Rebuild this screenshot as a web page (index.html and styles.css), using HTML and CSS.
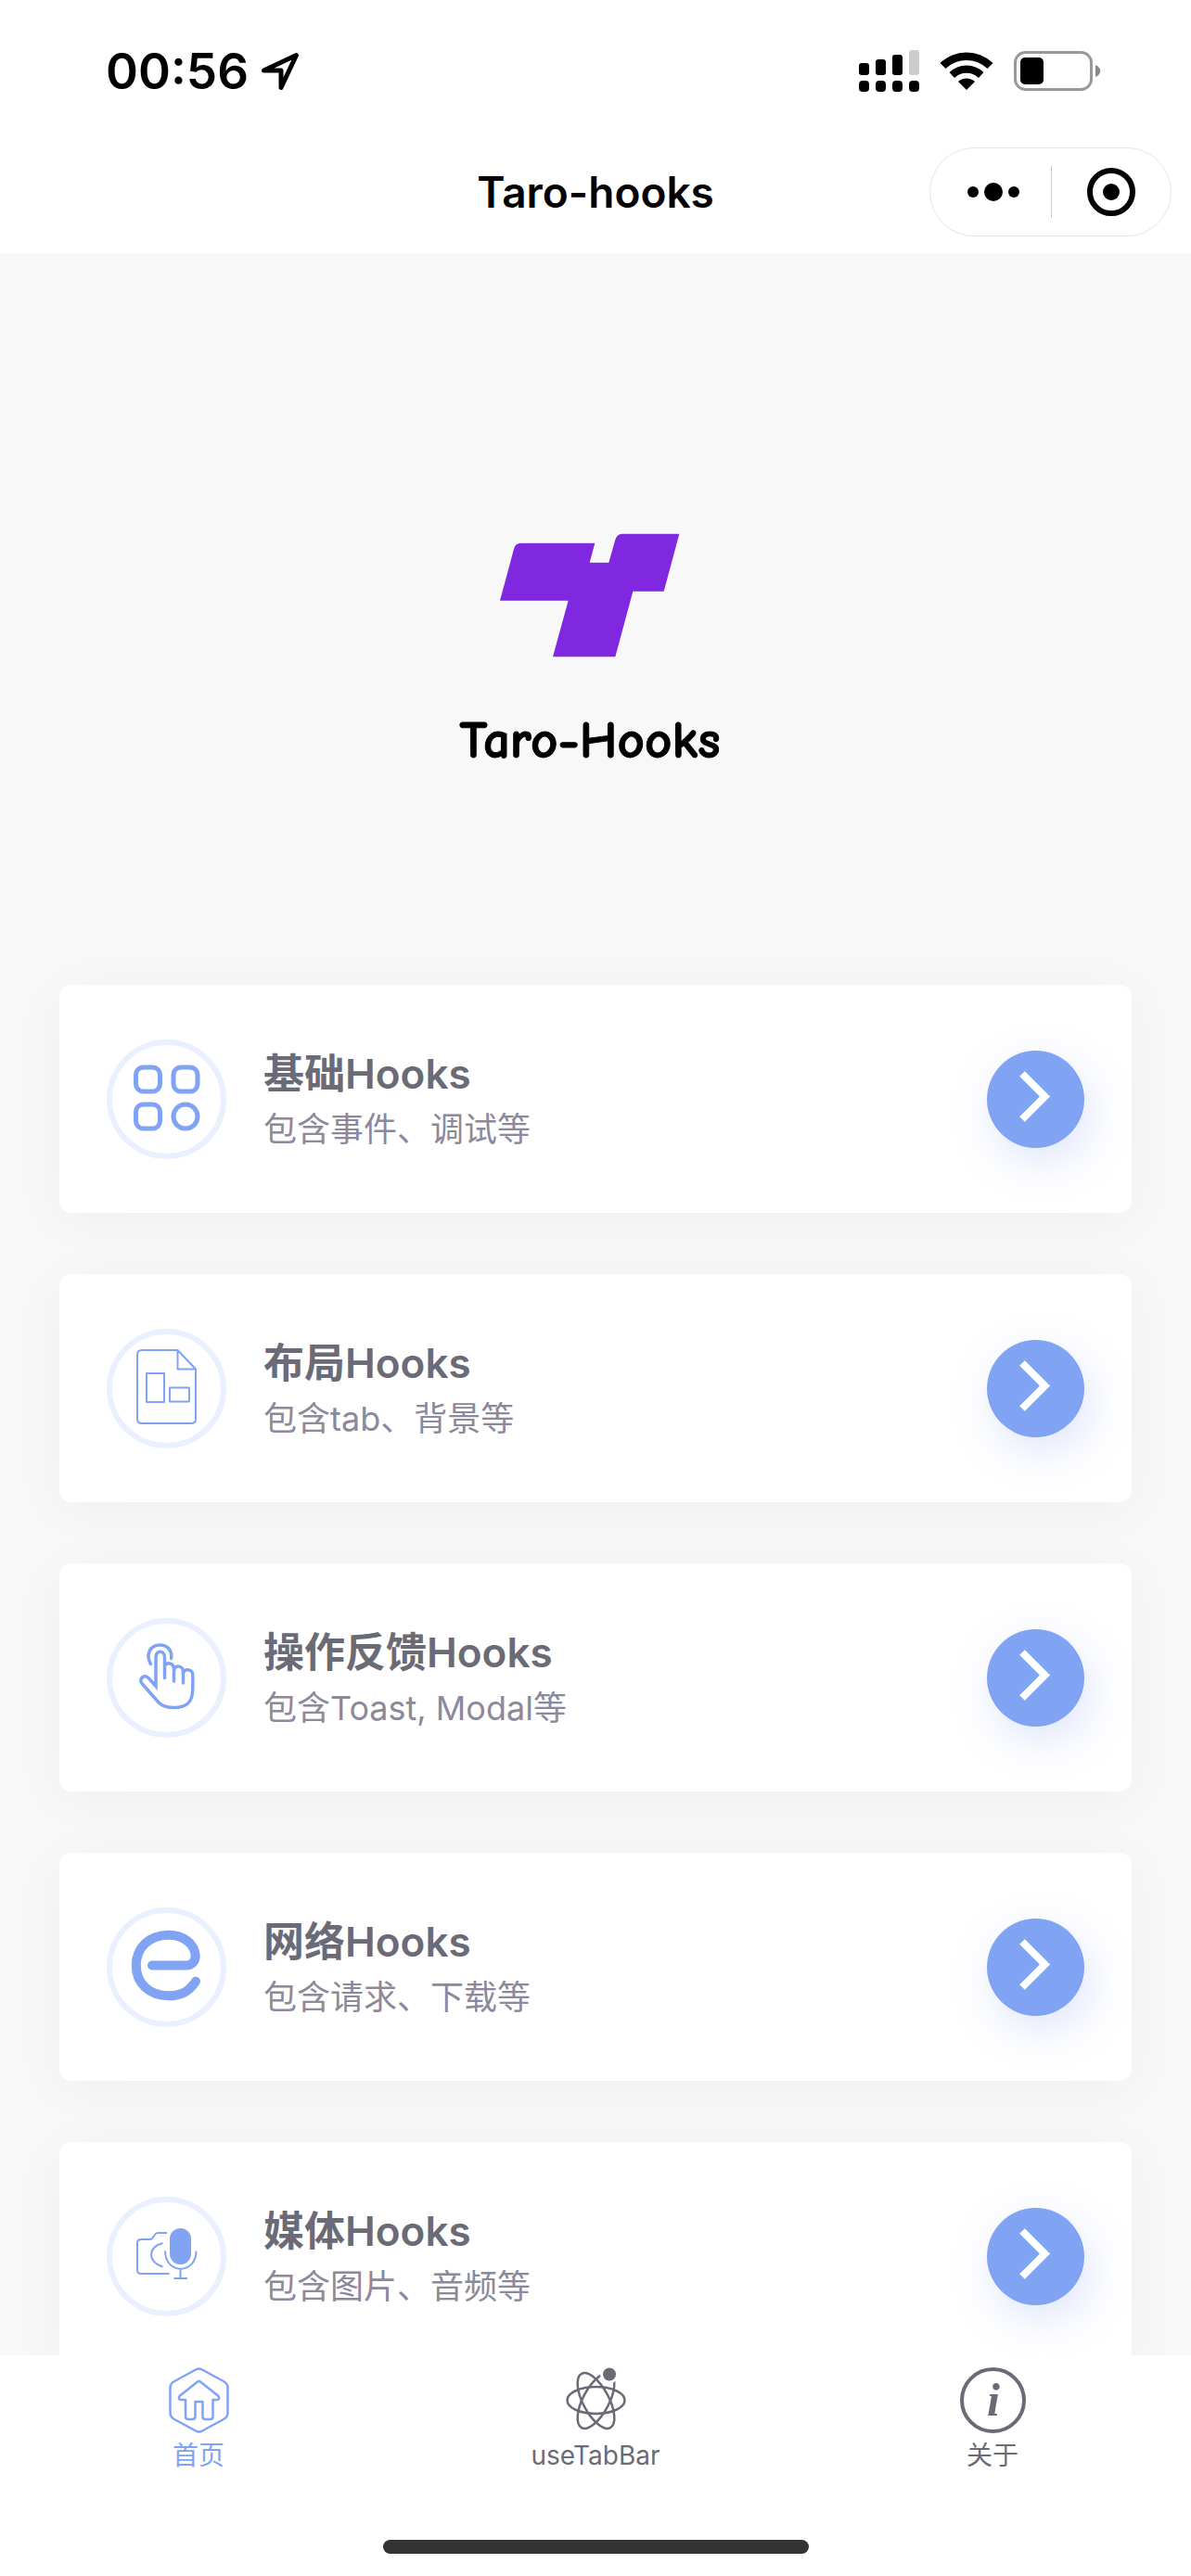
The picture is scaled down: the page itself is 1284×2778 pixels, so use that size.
FILE: index.html
```html
<!DOCTYPE html>
<html lang="zh-CN">
<head>
<meta charset="utf-8">
<meta name="viewport" content="width=device-width, initial-scale=1">
<title>Taro-hooks</title>
<link rel="stylesheet" href="styles.css">
</head>
<body>
<div class="app">
  <header class="header">
    <div class="status">
      <div class="status-left">
        <time class="clock">00:56</time>
        <svg class="location" viewBox="0 0 42 42" aria-hidden="true"><path d="M3.5 20 38.5 3.5 22 38.5 V20 Z"/></svg>
      </div>
      <div class="status-right">
        <svg width="65" height="46" viewBox="0 0 65 46" aria-hidden="true">
          <rect x="0" y="14" width="11" height="13" rx="3"/><rect x="18" y="10" width="11" height="17" rx="3"/>
          <rect x="36" y="5" width="11" height="22" rx="3"/><rect x="54" y="0" width="11" height="27" rx="3" fill="#ccc"/>
          <rect x="0" y="33" width="11" height="12" rx="4"/><rect x="18" y="33" width="11" height="12" rx="4"/>
          <rect x="36" y="33" width="11" height="12" rx="4"/><rect x="54" y="33" width="11" height="12" rx="4"/>
        </svg>
        <svg width="58" height="43" viewBox="0 0 58 43" aria-hidden="true">
          <path d="M0.500 13 A41 41 0 0 1 57.500 13 L51.500 19 A32.500 32.500 0 0 0 6.500 19 Z"/>
          <path d="M10.500 23 A26.500 26.500 0 0 1 47.500 23 L42 29 A19 19 0 0 0 16 29 Z"/>
          <path d="M20 33 A13 13 0 0 1 38 33 L29 42 Z"/>
        </svg>
        <svg width="94" height="44" viewBox="0 0 94 44" aria-hidden="true">
          <rect x="1.500" y="1.500" width="82" height="40" rx="11" fill="none" stroke="#999" stroke-width="3"/>
          <rect x="7" y="7" width="25" height="29" rx="5"/>
          <path d="M88 15 C95 18 95 25 88 28 Z" fill="#888"/>
        </svg>
      </div>
    </div>
    <div class="navbar">
      <h1 class="navbar-title">Taro-hooks</h1>
      <div class="capsule">
        <button class="capsule-button" type="button" aria-label="更多">
          <svg width="56" height="20" viewBox="0 0 56 20"><circle cx="6" cy="10" r="6"/><circle cx="28" cy="10" r="10"/><circle cx="50" cy="10" r="6"/></svg>
        </button>
        <button class="capsule-button" type="button" aria-label="关闭">
          <svg width="52" height="52" viewBox="0 0 52 52"><circle cx="26" cy="26" r="23" fill="none" stroke="#000" stroke-width="6"/><circle cx="26" cy="26" r="9"/></svg>
        </button>
      </div>
    </div>
  </header>

  <main class="content">
    <section class="hero">
      <svg class="logo" viewBox="230 104 588 402" aria-hidden="true"><path d="M233 322 278 155 Q283 136 300 136 H540 L523 199 H585 L606 125 Q612 106 628 106 H813 L763 292 H663 L606 504 H404 L454 322 Z"/></svg>
      <p class="brand">Taro-Hooks</p>
    </section>

    <ul class="cards">
      <li class="card">
        <span class="card-icon">
          <svg viewBox="6 6 117 117" stroke-width="5" aria-hidden="true"><rect x="31.500" y="30" width="26" height="26" rx="8"/><rect x="72" y="30" width="26" height="26" rx="8"/><rect x="31.500" y="70" width="26" height="26" rx="8"/><circle cx="85" cy="83" r="13"/></svg>
        </span>
        <div class="card-text"><h2 class="card-title">基础Hooks</h2><p class="card-note">包含事件、调试等</p></div>
        <button class="go" type="button" aria-label="基础Hooks"><svg viewBox="0 0 105 105"><path d="M38 25 62.500 49.500 38 74"/></svg></button>
      </li>
      <li class="card">
        <span class="card-icon">
          <svg viewBox="6 6 117 117" stroke-width="2" stroke-linejoin="round" aria-hidden="true"><path d="M76.500 23 H38 Q33 23 33 28 V97 Q33 102 38 102 H91 Q96 102 96 97 V43.500 Z M76.500 23 V43.500 H96"/><rect x="43" y="48" width="19" height="31"/><rect x="68" y="63.500" width="21" height="15"/></svg>
        </span>
        <div class="card-text"><h2 class="card-title">布局Hooks</h2><p class="card-note">包含tab、背景等</p></div>
        <button class="go" type="button" aria-label="布局Hooks"><svg viewBox="0 0 105 105"><path d="M38 25 62.500 49.500 38 74"/></svg></button>
      </li>
      <li class="card">
        <span class="card-icon">
          <svg viewBox="6 6 117 117" stroke-width="3.5" stroke-linecap="round" aria-hidden="true"><path d="M47.500 49.500 C42 40 46 29 57.500 29 C66 29 71 36 69.500 43.500"/><path d="M62.500 64.500 V42.500 C62.500 34 53 34 53 42.500 V73.500 L45 64.500 C40 60 34.500 66 38 70.500 L56 91 C60 95 65 96.500 73 96.500 C87 96.500 92.800 90 92.800 76 V61 C92.800 55 84 54 82.500 59"/><path d="M62.500 52 C64 47 72.500 48 72.500 55 V68 M72.500 56 C74 50 82.500 51 82.500 58 V70"/></svg>
        </span>
        <div class="card-text"><h2 class="card-title">操作反馈Hooks</h2><p class="card-note">包含Toast, Modal等</p></div>
        <button class="go" type="button" aria-label="操作反馈Hooks"><svg viewBox="0 0 105 105"><path d="M38 25 62.500 49.500 38 74"/></svg></button>
      </li>
      <li class="card">
        <span class="card-icon">
          <svg viewBox="6 6 117 117" stroke-width="10" stroke-linecap="round" aria-hidden="true"><path d="M49 62.500 H86 C91 62.500 96 58.500 95.700 52 C94.500 39 83 29.700 66.500 29.700 C46 29.700 31.800 43.500 31.800 62.500 C31.800 82 46 95.300 66.800 95.300 C80 95.300 88.500 91 96 79.700"/></svg>
        </span>
        <div class="card-text"><h2 class="card-title">网络Hooks</h2><p class="card-note">包含请求、下载等</p></div>
        <button class="go" type="button" aria-label="网络Hooks"><svg viewBox="0 0 105 105"><path d="M38 25 62.500 49.500 38 74"/></svg></button>
      </li>
      <li class="card">
        <span class="card-icon">
          <svg viewBox="6 6 117 117" stroke-width="2" aria-hidden="true"><path d="M65 39 H55 Q53 39 52 41 L49 45 Q48 46 46 46 H37 Q33 46 33 50 V79 Q33 83 37 83 H67.500 M60.500 50 C44 54 44 71 60.500 75.500 M63 58.500 C63 84 96.500 84 96.500 58.500 M79.500 77.500 V88 M72.500 88 H87"/><rect class="mic" x="68" y="34" width="23" height="39" rx="11.5"/></svg>
        </span>
        <div class="card-text"><h2 class="card-title">媒体Hooks</h2><p class="card-note">包含图片、音频等</p></div>
        <button class="go" type="button" aria-label="媒体Hooks"><svg viewBox="0 0 105 105"><path d="M38 25 62.500 49.500 38 74"/></svg></button>
      </li>
    </ul>
  </main>

  <footer class="footer">
    <nav class="tabs">
      <a class="tab tab-active" href="#home" aria-current="page">
        <svg class="tab-icon" viewBox="0 0 71 71" stroke-width="2.5" stroke-linejoin="round" aria-hidden="true"><path d="M32 2.500 Q35.500 0.500 39 2.500 L62 15 Q66.500 17.500 66.500 22 V49 Q66.500 53.500 62 56 L39 68.500 Q35.500 70.500 32 68.500 L9 56 Q4.500 53.500 4.500 49 V22 Q4.500 17.500 9 15 Z"/><path d="M34 15.500 Q35.500 14.200 37 15.500 L56.500 31 Q58.500 35 54.500 35 H50.500 V53 Q50.500 56 47.500 56 H42.500 Q39.500 56 39.500 53 V37 H31.500 V53 Q31.500 56 28.500 56 H24 Q21 56 21 53 V35 H16.500 Q12.500 35 14.500 31 Z"/></svg>
        <span>首页</span>
      </a>
      <a class="tab" href="#tabbar">
        <svg class="tab-icon" viewBox="0 0 71 71" stroke-width="2.5" aria-hidden="true"><ellipse cx="35.500" cy="35.500" rx="31" ry="14.500"/><ellipse cx="35.500" cy="36" rx="33" ry="14" transform="rotate(62 35.500 36)"/><ellipse cx="35.500" cy="36" rx="33" ry="14" transform="rotate(-62 35.500 36)"/><circle cx="50" cy="7.500" r="8.500" fill="currentColor" stroke="#fff" stroke-width="3"/></svg>
        <span>useTabBar</span>
      </a>
      <a class="tab" href="#about">
        <svg class="tab-icon" viewBox="0 0 71 71" stroke-width="4" aria-hidden="true"><circle cx="35.500" cy="35.500" r="33.500"/><text class="tab-glyph" x="36" y="52">i</text></svg>
        <span>关于</span>
      </a>
    </nav>
    <div class="home-indicator"></div>
  </footer>
</div>
</body>
</html>
```
FILE: styles.css
```css
* {
  box-sizing: border-box;
}

body,
h1,
h2,
p,
ul {
  margin: 0;
  padding: 0;
}

body {
  background: #fff;
  color: #000;
  font-family: Inter, "Noto Sans CJK SC", sans-serif;
}

svg {
  display: block;
}

button {
  padding: 0;
  border: 0;
  background: none;
}

.app {
  display: flex;
  flex-direction: column;
  height: 100vh;
}

.header {
  flex: none;
}

/* Status bar */
.status {
  display: flex;
  align-items: center;
  justify-content: space-between;
  height: 141px;
  padding: 12px 97px 0 114px;
}

.status-left {
  display: flex;
  align-items: center;
  gap: 13px;
}

.clock {
  font-size: 53px;
  font-weight: 600;
  line-height: 66px;
}

.location {
  width: 42px;
  height: 42px;
  fill: none;
  stroke: #000;
  stroke-width: 5;
  stroke-linejoin: round;
}

.status-right {
  display: flex;
  align-items: center;
  gap: 22px;
}

/* Navigation bar: the title stays centred between two equal side columns */
.navbar {
  display: grid;
  grid-template-columns: 1fr auto 1fr;
  align-items: center;
  height: 132px;
  padding: 0 21px;
}

.navbar-title {
  grid-column: 2;
  font-size: 46px;
  font-weight: 600;
  line-height: 60px;
}

.capsule {
  display: flex;
  justify-self: end;
  width: 261px;
  height: 96px;
  padding: 19px 0;
  border: 1px solid #e5e5e5;
  border-radius: 48px;
}

.capsule-button {
  display: flex;
  width: 50%;
  align-items: center;
  justify-content: center;
}

.capsule-button:first-child {
  padding-left: 6px;
}

.capsule-button + .capsule-button {
  border-left: 1px solid #ccc;
}

/* Scrolling page */
.content {
  flex: 1;
  min-height: 0;
  overflow-y: auto;
  scrollbar-width: none;
  background: #f8f8f8;
}

.hero {
  display: flex;
  flex-direction: column;
  align-items: center;
  gap: 58px;
  padding: 302px 12px 231px 0;
}

.logo {
  width: 196px;
  height: 134px;
  fill: #7f28e0;
}

.brand {
  font-family: "Comic Sans MS", "Comic Neue", "Noto Sans", sans-serif;
  font-size: 57px;
  font-weight: 700;
  line-height: 64px;
  -webkit-text-stroke: 1px #000;
}

.cards {
  display: flex;
  flex-direction: column;
  gap: 66px;
  padding: 0 64px 66px;
  list-style: none;
}

.card {
  display: flex;
  align-items: center;
  height: 246px;
  padding: 0 51px;
  border-radius: 14px;
  background: #fff;
  box-shadow: 0 8px 60px rgba(0, 0, 0, 0.04);
}

.card-icon {
  flex: none;
  width: 129px;
  height: 129px;
  border: 6px solid #eaf0fd;
  border-radius: 50%;
}

.card-icon svg {
  fill: none;
  stroke: #80a3f4;
}

.card-icon .mic {
  fill: #80a3f4;
  stroke: none;
}

.card-text {
  flex: 1;
  padding: 6px 0 0 40px;
}

.card-title {
  color: #6b6a77;
  font-size: 44px;
  font-weight: 600;
  line-height: 60px;
}

.card-note {
  color: #8b899b;
  font-size: 36px;
  font-weight: 400;
  line-height: 60px;
}

.go {
  flex: none;
  width: 105px;
  height: 105px;
  border-radius: 50%;
  background: #80a3f4;
  box-shadow: 7px 15px 45px rgba(128, 155, 244, 0.25);
}

.go svg {
  fill: none;
  stroke: #fff;
  stroke-width: 8;
}

/* Tab bar */
.footer {
  display: flex;
  flex: none;
  flex-direction: column;
  align-items: center;
  gap: 73px;
  padding: 13px 0 24px;
  background: #fff;
}

.tabs {
  display: flex;
  width: 100%;
}

.tab {
  display: flex;
  flex: 1;
  flex-direction: column;
  align-items: center;
  gap: 6px;
  color: #6b6a77;
  font-size: 28px;
  line-height: 36px;
  text-decoration: none;
}

.tab-active {
  color: #80a3f8;
}

.tab-icon {
  width: 71px;
  height: 71px;
  fill: none;
  stroke: currentColor;
}

.tab-glyph {
  fill: currentColor;
  stroke: none;
  font-family: "Liberation Serif", serif;
  font-size: 50px;
  font-style: italic;
  font-weight: 700;
  text-anchor: middle;
}

.home-indicator {
  width: 459px;
  height: 15px;
  border-radius: 8px;
  background: #333;
}
```
